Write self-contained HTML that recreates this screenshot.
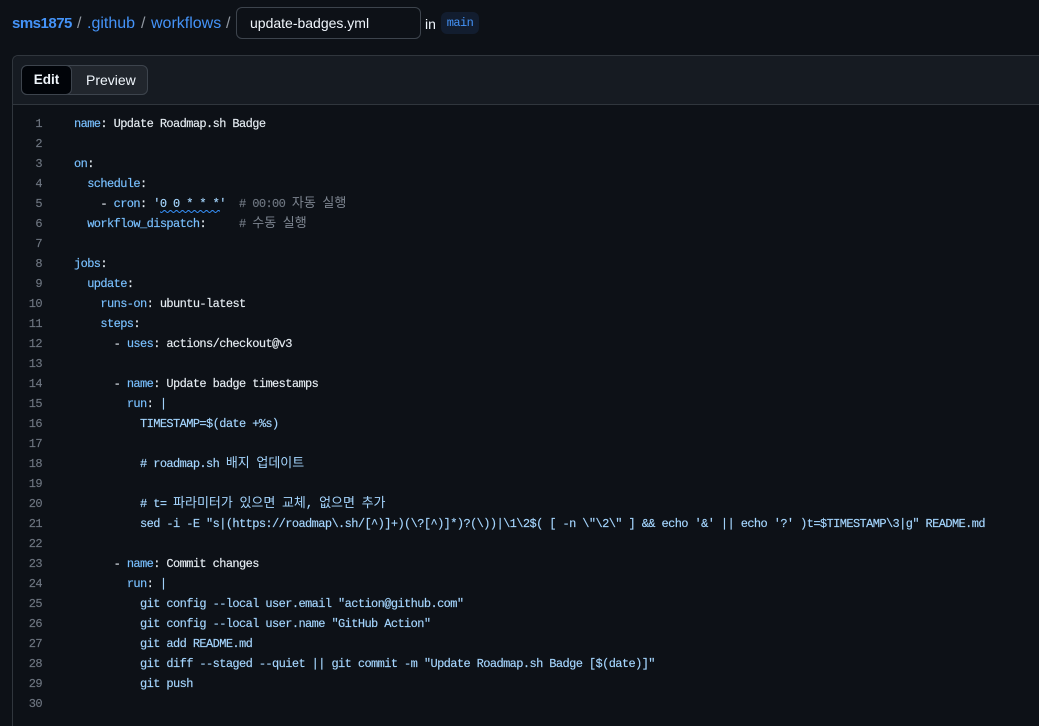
<!DOCTYPE html>
<html lang="en">
<head>
<meta charset="utf-8">
<title>update-badges.yml</title>
<style>
html,body{margin:0;padding:0;width:1039px;height:726px;overflow:hidden;background:#0d1117;}
body{position:relative;font-family:"Liberation Sans","Noto Sans CJK KR",sans-serif;color:#e6edf3;}
.bc{position:absolute;top:14px;font-size:16px;line-height:20px;color:#4493f8;white-space:nowrap;}
.sl{color:#9198a1;}
#input{position:absolute;left:236px;top:7px;width:183px;height:30px;border:1px solid #3d444d;border-radius:6px;background:#0d1117;font-size:14px;line-height:30px;text-indent:13px;color:#f0f6fc;}
#in{position:absolute;left:425px;top:14px;font-size:14px;line-height:20px;color:#f0f6fc;}
#main{position:absolute;left:441px;top:12px;width:38px;height:22px;border-radius:6px;background:#121d2f;color:#4493f8;font-family:"Liberation Mono",monospace;font-size:12px;letter-spacing:-.6px;line-height:22px;text-align:center;}
#card{position:absolute;left:12px;top:55px;width:1026px;height:670px;border:1px solid #30363d;border-right:0;border-bottom:0;border-radius:6px 0 0 0;background:#0d1117;overflow:hidden;}
#head{position:absolute;left:0;top:0;right:0;height:48px;background:#161b22;border-bottom:1px solid #30363d;border-radius:6px 0 0 0;}
#tabs{position:absolute;left:8px;top:9px;width:125px;height:28px;border:1px solid #3d444d;border-radius:6px;background:#21262d;}
#edit{position:absolute;left:-1px;top:-1px;width:49px;height:28px;border:1px solid #3d444d;border-radius:6px;background:#010409;font-size:13.5px;font-weight:bold;line-height:28px;text-align:center;color:#f0f6fc;}
#prev{position:absolute;left:64px;top:0;font-size:14px;line-height:28px;color:#f0f6fc;}
.n,.l{position:absolute;height:20px;margin-top:1px;line-height:20px;font-family:"Liberation Mono","Noto Sans CJK KR",monospace;font-size:12px;letter-spacing:-.6px;white-space:pre;-webkit-text-stroke:.15px;}
.n{left:12px;width:30px;text-align:right;color:#6e7681;}
.l{left:74px;color:#e6edf3;}
.k{color:#79c0ff;}
.s{color:#a5d6ff;}
.c{color:#6e7681;}
.h{letter-spacing:0;font-size:13px;-webkit-text-stroke:0;}
.c .h{color:#7d8590;}
svg{position:absolute;}
</style>
</head>
<body>
<div class="bc" style="left:12px;font-weight:bold;font-size:15px;letter-spacing:-.5px;">sms1875</div>
<div class="bc sl" style="left:77px;">/</div>
<div class="bc" style="left:87px;">.github</div>
<div class="bc sl" style="left:141px;">/</div>
<div class="bc" style="left:151px;">workflows</div>
<div class="bc sl" style="left:226px;">/</div>
<div id="input">update-badges.yml</div>
<div id="in">in</div>
<div id="main">main</div>

<div id="card">
  <div id="head">
    <div id="tabs">
      <div id="edit">Edit</div>
      <div id="prev">Preview</div>
    </div>
  </div>
</div>

<div class="n" style="top:113px">1</div><div class="l" style="top:113px"><span class="k">name</span>: Update Roadmap.sh Badge</div>
<div class="n" style="top:133px">2</div>
<div class="n" style="top:153px">3</div><div class="l" style="top:153px"><span class="k">on</span>:</div>
<div class="n" style="top:173px">4</div><div class="l" style="top:173px">  <span class="k">schedule</span>:</div>
<div class="n" style="top:193px">5</div><div class="l" style="top:193px">    - <span class="k">cron</span>: <span class="s">'0 0 * * *'</span>  <span class="c"># 00:00 <span class="h">자동</span> <span class="h">실행</span></span></div>
<div class="n" style="top:213px">6</div><div class="l" style="top:213px">  <span class="k">workflow_dispatch</span>:     <span class="c"># <span class="h">수동</span> <span class="h">실행</span></span></div>
<div class="n" style="top:233px">7</div>
<div class="n" style="top:253px">8</div><div class="l" style="top:253px"><span class="k">jobs</span>:</div>
<div class="n" style="top:273px">9</div><div class="l" style="top:273px">  <span class="k">update</span>:</div>
<div class="n" style="top:293px">10</div><div class="l" style="top:293px">    <span class="k">runs-on</span>: ubuntu-latest</div>
<div class="n" style="top:313px">11</div><div class="l" style="top:313px">    <span class="k">steps</span>:</div>
<div class="n" style="top:333px">12</div><div class="l" style="top:333px">      - <span class="k">uses</span>: actions/checkout@v3</div>
<div class="n" style="top:353px">13</div>
<div class="n" style="top:373px">14</div><div class="l" style="top:373px">      - <span class="k">name</span>: Update badge timestamps</div>
<div class="n" style="top:393px">15</div><div class="l" style="top:393px">        <span class="k">run</span>: <span class="s">|</span></div>
<div class="n" style="top:413px">16</div><div class="l s" style="top:413px">          TIMESTAMP=$(date +%s)</div>
<div class="n" style="top:433px">17</div>
<div class="n" style="top:453px">18</div><div class="l s" style="top:453px">          # roadmap.sh <span class="h">배지</span> <span class="h">업데이트</span></div>
<div class="n" style="top:473px">19</div>
<div class="n" style="top:493px">20</div><div class="l s" style="top:493px">          # t= <span class="h">파라미터가</span> <span class="h">있으면</span> <span class="h">교체</span>, <span class="h">없으면</span> <span class="h">추가</span></div>
<div class="n" style="top:513px">21</div><div class="l s" style="top:513px">          sed -i -E "s|(https://roadmap\.sh/[^)]+)(\?[^)]*)?(\))|\1\2$( [ -n \"\2\" ] &amp;&amp; echo '&amp;' || echo '?' )t=$TIMESTAMP\3|g" README.md</div>
<div class="n" style="top:533px">22</div>
<div class="n" style="top:553px">23</div><div class="l" style="top:553px">      - <span class="k">name</span>: Commit changes</div>
<div class="n" style="top:573px">24</div><div class="l" style="top:573px">        <span class="k">run</span>: <span class="s">|</span></div>
<div class="n" style="top:593px">25</div><div class="l s" style="top:593px">          git config --local user.email "action@github.com"</div>
<div class="n" style="top:613px">26</div><div class="l s" style="top:613px">          git config --local user.name "GitHub Action"</div>
<div class="n" style="top:633px">27</div><div class="l s" style="top:633px">          git add README.md</div>
<div class="n" style="top:653px">28</div><div class="l s" style="top:653px">          git diff --staged --quiet || git commit -m "Update Roadmap.sh Badge [$(date)]"</div>
<div class="n" style="top:673px">29</div><div class="l s" style="top:673px">          git push</div>
<div class="n" style="top:693px">30</div>

<svg style="left:160px;top:210px" width="60" height="4" viewBox="0 0 60 4" fill="none"><path d="M0 1.5q1.5 2 3 0t3 0 3 0 3 0 3 0 3 0 3 0 3 0 3 0 3 0 3 0 3 0 3 0 3 0 3 0 3 0 3 0 3 0 3 0 3 0" stroke="#3794ff" stroke-width="1"/></svg>
</body>
</html>
